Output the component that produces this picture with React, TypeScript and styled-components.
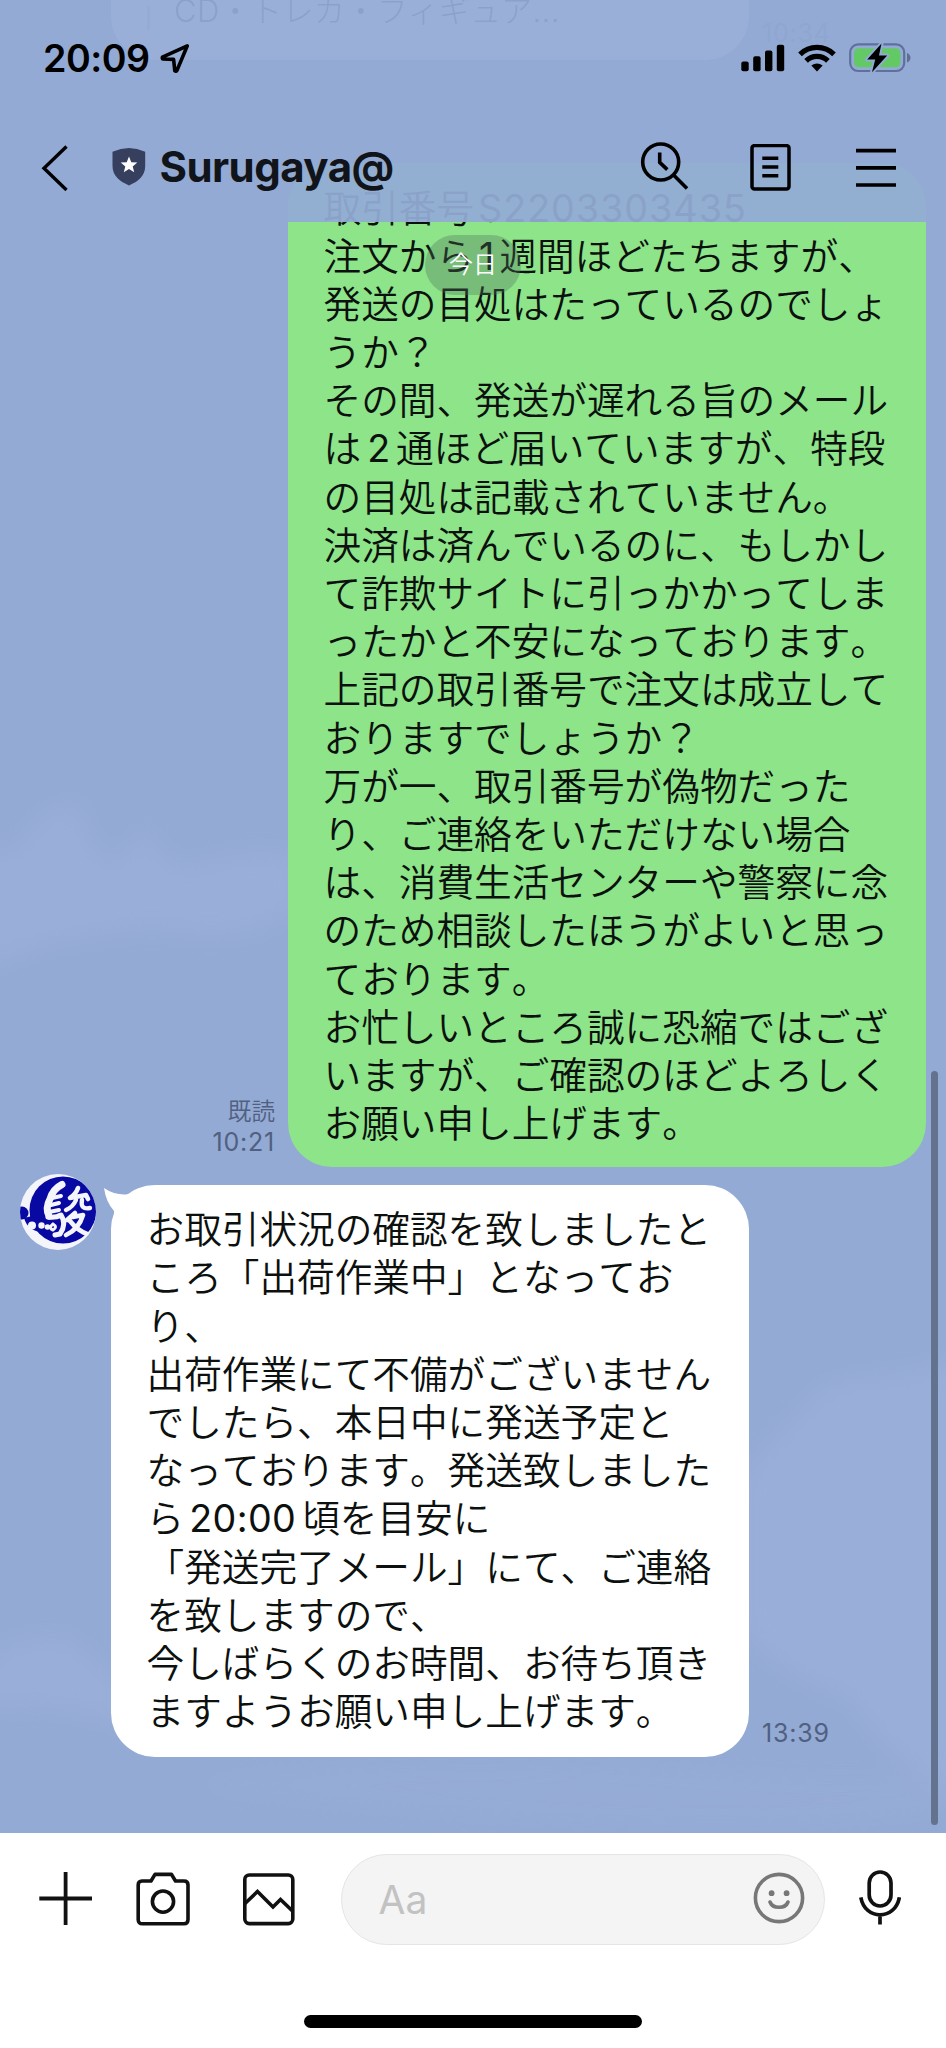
import React from "react";
import styled, { createGlobalStyle } from "styled-components";

const GlobalStyle = createGlobalStyle`
  * { box-sizing: border-box; }
  body { margin: 0; font-family: Inter, "Noto Sans CJK JP", sans-serif; color: #111; }
`;

const Screen = styled.div`
  position: relative;
  display: flex;
  flex-direction: column;
  width: 946px;
  height: 2048px;
  overflow: hidden;
  background: #93aad5;
`;

const Clouds = styled.svg`
  position: absolute;
  inset: 0;
`;

const Header = styled.header`
  position: absolute;
  z-index: 2;
  top: 0;
  left: 0;
  width: 946px;
  height: 222px;
  background: rgba(147, 170, 213, 0.94);
`;

const StatusBar = styled.div`
  display: flex;
  align-items: center;
  height: 116px;
  padding: 0 35px 0 43px;
`;

const Clock = styled.span`
  width: 117px;
  font-size: 37.6px;
  font-weight: 600;
  letter-spacing: -0.5px;
  color: #000;
`;

const StatusIcons = styled.div`
  display: flex;
  align-items: center;
  margin-left: auto;
  gap: 13px;
`;

const TitleBar = styled.div`
  display: flex;
  align-items: center;
  height: 103px;
  padding: 0 50px 0 41px;
`;

const Title = styled.h1`
  margin: 0 auto 0 13.5px;
  font-size: 42px;
  font-weight: 700;
  letter-spacing: -0.55px;
  line-height: 50px;
  padding-bottom: 2px;
  color: #111419;
`;

const Actions = styled.div`
  display: flex;
  align-items: center;
`;

const Action = styled.span<{ $gap: number }>`
  display: flex;
  margin-right: ${(p) => p.$gap}px;
`;

const Chat = styled.main`
  position: relative;
  display: flex;
  flex-direction: column;
  flex: 0 0 1833px;
  height: 1833px;
  overflow: hidden;
`;

const MessageRow = styled.div<{ $own?: boolean; $gap: number }>`
  display: flex;
  align-items: flex-end;
  justify-content: ${(p) => (p.$own ? "flex-end" : "flex-start")};
  padding: ${(p) => (p.$own ? "0 20px 0 0" : "0 0 0 20px")};
  margin-bottom: ${(p) => p.$gap}px;
`;

const Bubble = styled.div<{ $own?: boolean }>`
  position: relative;
  flex: none;
  width: 638px;
  padding: 21.5px 34px ${(p) => (p.$own ? 18.5 : 20.5)}px 35.5px;
  border-radius: 44px;
  background: ${(p) => (p.$own ? "#8de489" : "#fff")};
  font-size: 37.65px;
  font-weight: 350;
  line-height: 48.2px;
  font-kerning: none;
  white-space: nowrap;
  color: #0c100e;
`;

const Line = styled.div`
  height: 48.2px;
`;

const Latin = styled.span<{ $before: number; $after: number; $track: number }>`
  margin: 0 ${(p) => p.$after}px 0 ${(p) => p.$before}px;
  font-weight: 400;
  letter-spacing: ${(p) => p.$track}px;
`;

const Preview = styled.div`
  display: flex;
  align-items: flex-end;
  height: 60px;
  width: 638px;
  padding: 0 0 30px 36px;
  gap: 24px;
  border-radius: 0 0 44px 44px;
  background: #fff;
  font-size: 31px;
  line-height: 38px;
  font-weight: 300;
  letter-spacing: 0.4px;
  white-space: nowrap;
`;

const Rule = styled.span`
  width: 3px;
  height: 24px;
  background: #a9b0bd;
`;

const Meta = styled.div<{ $own?: boolean; $lift?: number }>`
  display: flex;
  flex-direction: column;
  padding: ${(p) => (p.$own ? "0 13px 0 0" : "0 0 0 13px")};
  margin-bottom: ${(p) => p.$lift ?? 9}px;
  text-align: ${(p) => (p.$own ? "right" : "left")};
  font-size: 25px;
  line-height: 30px;
  letter-spacing: 0.8px;
  color: #51607f;
`;

const ReadMark = styled.span`
  font-size: 23.6px;
  font-weight: 350;
  letter-spacing: 0;
`;

const AvatarSlot = styled.div`
  align-self: flex-start;
  flex: none;
  width: 91px;
  margin-top: -11px;
`;

const Tail = styled.svg`
  position: absolute;
  left: -7px;
  top: 3px;
`;

const DatePill = styled.div`
  position: absolute;
  z-index: 3;
  left: 425px;
  top: 235px;
  width: 96px;
  height: 60px;
  border-radius: 30px;
  background: rgba(80, 110, 90, 0.34);
  color: #fff;
  font-size: 24px;
  font-weight: 350;
  line-height: 59px;
  text-align: center;
`;

const ScrollThumb = styled.div`
  position: absolute;
  right: 8px;
  top: 1071px;
  width: 7px;
  height: 754px;
  border-radius: 4px;
  background: #62728f;
`;

const Footer = styled.footer`
  position: relative;
  display: flex;
  flex-direction: column;
  align-items: center;
  flex: 1;
  background: #fff;
`;

const Composer = styled.div`
  display: flex;
  align-items: center;
  width: 946px;
  height: 90px;
  margin-top: 21px;
  padding: 0 45px 0 39px;
`;

const Tools = styled.div`
  display: flex;
  align-items: center;
  width: 302px;
`;

const Tool = styled.span<{ $gap: number }>`
  display: flex;
  margin-right: ${(p) => p.$gap}px;
`;

const Field = styled.div`
  display: flex;
  align-items: center;
  justify-content: space-between;
  width: 485px;
  height: 91px;
  padding: 0 19px 3px 37px;
  border: 1px solid #e5e5e5;
  border-radius: 46px;
  background: #f4f4f4;
  font-size: 39px;
  color: #c2c2c2;
`;

const Placeholder = styled.span`
  padding-top: 3px;
`;

const MicSlot = styled.span`
  display: flex;
  margin: 0 0 4px 34px;
`;

const HomeIndicator = styled.div`
  width: 338px;
  height: 13px;
  margin-top: 71px;
  border-radius: 7px;
  background: #000;
`;

type Part = string | { latin: string; before: number; after: number; track?: number };

const ownLines: Part[][] = [
  ["取引番号", { latin: "S2203303435", before: 4, after: 0, track: 1 }],
  ["注文から", { latin: "1", before: 5, after: 5 }, "週間ほどたちますが、"],
  ["発送の目処はたっているのでしょ"],
  ["うか？"],
  ["その間、発送が遅れる旨のメール"],
  ["は", { latin: "2", before: 6, after: 6 }, "通ほど届いていますが、特段"],
  ["の目処は記載されていません。"],
  ["決済は済んでいるのに、もしかし"],
  ["て詐欺サイトに引っかかってしま"],
  ["ったかと不安になっております。"],
  ["上記の取引番号で注文は成立して"],
  ["おりますでしょうか？"],
  ["万が一、取引番号が偽物だった"],
  ["り、ご連絡をいただけない場合"],
  ["は、消費生活センターや警察に念"],
  ["のため相談したほうがよいと思っ"],
  ["ております。"],
  ["お忙しいところ誠に恐縮ではござ"],
  ["いますが、ご確認のほどよろしく"],
  ["お願い申し上げます。"],
];

const replyLines: Part[][] = [
  ["お取引状況の確認を致しましたと"],
  ["ころ「出荷作業中」となってお"],
  ["り、"],
  ["出荷作業にて不備がございません"],
  ["でしたら、本日中に発送予定と"],
  ["なっております。発送致しました"],
  ["ら", { latin: "20:00", before: 5, after: 6, track: 0.4 }, "頃を目安に"],
  ["「発送完了メール」にて、ご連絡"],
  ["を致しますので、"],
  ["今しばらくのお時間、お待ち頂き"],
  ["ますようお願い申し上げます。"],
];

const Lines = ({ lines }: { lines: Part[][] }) => (
  <>
    {lines.map((parts, i) => (
      <Line key={i}>
        {parts.map((p, j) =>
          typeof p === "string" ? (
            p
          ) : (
            <Latin key={j} $before={p.before} $after={p.after} $track={p.track ?? 0}>
              {p.latin}
            </Latin>
          )
        )}
      </Line>
    ))}
  </>
);

const CloudLayer = () => (
  <Clouds width="946" height="1833" viewBox="0 0 946 1833">
    <defs>
      <filter id="soft" x="-20%" y="-20%" width="140%" height="140%">
        <feGaussianBlur stdDeviation="13" />
      </filter>
    </defs>
    <g fill="#9cb1da" filter="url(#soft)" opacity="0.7">
      <path d="M-20 850 L20 845 Q30 810 80 800 Q90 850 115 865 Q125 835 155 830 Q160 865 190 865 Q240 845 300 855 L300 910 Q240 950 160 930 Q60 935 -20 970Z" />
      <path d="M740 1475 Q770 1440 800 1410 Q820 1375 880 1375 Q930 1370 970 1350 L970 1800 Q880 1760 850 1700 Q780 1680 740 1630Z" />
      <path d="M-20 1660 Q30 1625 75 1640 Q105 1660 130 1700 L130 1730 Q60 1700 -20 1710Z" />
      <path d="M200 1780 Q400 1750 700 1770 T960 1750 L960 1810 Q700 1850 200 1790Z" opacity="0.5" />
    </g>
  </Clouds>
);

const LocationIcon = () => (
  <svg width="30" height="31" viewBox="0 0 30 31" fill="none" stroke="#000" strokeWidth="3.6" strokeLinejoin="round">
    <path d="M27.3 2.8 L2.4 14.2 Q2 15.8 3 16 L13.6 16.4 L14.8 27.8 Q16 29 17 27.4Z" />
  </svg>
);

const SignalIcon = () => (
  <svg width="44" height="28" viewBox="0 0 44 28" fill="#000">
    <rect x="0.3" y="17.6" width="7.4" height="9.6" rx="2" />
    <rect x="12.2" y="12.3" width="7.4" height="14.9" rx="2" />
    <rect x="24" y="6.6" width="7.4" height="20.6" rx="2" />
    <rect x="35.8" y="0.8" width="7.4" height="26.4" rx="2" />
  </svg>
);

const WifiIcon = () => (
  <svg width="38" height="28" viewBox="0 0 38 28">
    <g fill="none" stroke="#000" strokeWidth="5.2">
      <path d="M2 10.4 A24.3 24.3 0 0 1 36 10.4" />
      <path d="M8.1 16.8 A15.6 15.6 0 0 1 29.9 16.8" />
    </g>
    <path d="M13.3 21.6 Q19 17.2 24.7 21.6 L19 27.4Z" />
  </svg>
);

const BatteryIcon = () => (
  <svg width="62" height="30" viewBox="0 0 62 30">
    <rect x="1.2" y="1.4" width="54" height="26.6" rx="8" fill="none" stroke="#5f709a" strokeWidth="2.2" />
    <path d="M58 10 Q61.5 11.5 61.5 14.7 Q61.5 18 58 19.4Z" fill="#5f6f94" />
    <rect x="5" y="5.2" width="46.4" height="19" rx="4.5" fill="#63c965" />
    <path d="M32.5 0.6 L18.2 16.6 H26.2 L23 29.2 L38.2 12.4 H30Z" fill="#000" stroke="#93aad5" strokeWidth="4" paintOrder="stroke" strokeLinejoin="round" />
  </svg>
);

const BackIcon = () => (
  <svg width="27" height="46" viewBox="0 0 27 46" fill="none" stroke="#000" strokeWidth="3.4">
    <path d="M25.5 1.5 L3 23.2 L25.5 45" />
  </svg>
);

const ShieldSvg = styled.svg`
  margin: 0 0 3px 44px;
`;

const ShieldIcon = () => (
  <ShieldSvg width="34" height="39" viewBox="0 0 34 39">
    <path d="M0.5 4.8 Q17 -2.6 33.2 4.8 V19 C33.2 29 26 34.5 17 38.4 C8 34.5 0.5 29 0.5 19Z" fill="#373f5e" />
    <path d="M17 9.6 L19.3 15.2 L25.3 15.6 L20.7 19.5 L22.2 25.3 L17 22.1 L11.8 25.3 L13.3 19.5 L8.7 15.6 L14.7 15.2Z" fill="#fff" />
  </ShieldSvg>
);

const HistorySearchIcon = () => (
  <svg width="49" height="51" viewBox="0 0 49 51" fill="none" stroke="#000" strokeWidth="3.6">
    <circle cx="20.7" cy="20" r="18" />
    <path d="M33.8 33.3 L47 46.5 M19.7 10.6 V20.4 L27.3 27.6" />
  </svg>
);

const NoteIcon = () => (
  <svg width="41" height="47" viewBox="0 0 41 47" fill="none" stroke="#000" strokeWidth="3.5">
    <rect x="2" y="1.6" width="37" height="43.4" rx="2.5" />
    <path d="M12.3 14.2 H28.3 M12.3 23 H28.3 M12.3 31.8 H28.3" />
  </svg>
);

const MenuIcon = () => (
  <svg width="40" height="40" viewBox="0 0 40 40" stroke="#000" strokeWidth="3.7">
    <path d="M0 2.6 H40 M0 19.8 H40 M0 37 H40" />
  </svg>
);

const Avatar = () => (
  <svg width="76" height="76" viewBox="0 0 76 76">
    <defs>
      <clipPath id="disc">
        <circle cx="38" cy="38" r="38" />
      </clipPath>
    </defs>
    <g clipPath="url(#disc)">
      <rect width="76" height="76" fill="#f4f5fb" />
      <circle cx="43" cy="36" r="33.5" fill="#0808a2" />
      <circle cx="2" cy="39" r="6.5" fill="#0808a2" />
      <path d="M4 44 Q8 58 24 58 L30 50 L12 42Z" fill="#0808a2" />
      <g fill="#f4f5fb">
        <circle cx="12" cy="51.5" r="4" />
        <circle cx="21.5" cy="51.5" r="3.2" />
        <circle cx="27.5" cy="53" r="2.8" />
      </g>
      <g fill="none" stroke="#f4f5fb" strokeLinecap="round" strokeLinejoin="round">
        <path d="M42 10.5 Q33 15 30 25 Q25 34 29 42" strokeWidth="7" />
        <path d="M32 24 L41 22 M31 31 L39 29 M29 38 L39 36" strokeWidth="4" />
        <path d="M28 43 Q36 44 41 41 Q47 50 40 60 L35 61" strokeWidth="5" />
        <path d="M33 50 Q38 53 33 56 Q28 54 33 50" strokeWidth="3" />
        <path d="M58 14 Q56 20 50 24 L66 21 L68 25" strokeWidth="4.6" />
        <path d="M56 26 Q53 33 46 36 M62 26 Q60 36 70 34" strokeWidth="4.4" />
        <path d="M55 39 L47 46 M53 43 L63 41 Q59 55 46 61 M50 47 Q57 56 67 60" strokeWidth="4.6" />
      </g>
    </g>
  </svg>
);

const PlusIcon = () => (
  <svg width="54" height="54" viewBox="0 0 54 54" stroke="#111" strokeWidth="3.8">
    <path d="M0.3 26.5 H53 M26.6 0 V53" />
  </svg>
);

const CameraIcon = () => (
  <svg width="54" height="54" viewBox="0 0 54 54" fill="none" stroke="#111" strokeWidth="3.6" strokeLinejoin="round">
    <path d="M6 9 H15 L19 2.4 H35.5 L39.5 9 H48 Q52 9 52 13 V47.5 Q52 51.8 48 51.8 H6.5 Q2.2 51.8 2.2 47.5 V13 Q2.2 9 6 9Z" />
    <circle cx="27" cy="29.6" r="10.6" />
  </svg>
);

const PictureIcon = () => (
  <svg width="54" height="54" viewBox="0 0 54 54" fill="none" stroke="#111" strokeWidth="3.6">
    <rect x="2.8" y="3" width="48" height="48.6" rx="4.5" />
    <path d="M3 31.5 L15.5 19.5 L31 35 L38.5 27.5 L50.5 39" />
  </svg>
);

const SmileIcon = () => (
  <svg width="52" height="52" viewBox="0 0 52 52" fill="none" stroke="#777" strokeWidth="3.6">
    <circle cx="26" cy="26" r="23.6" />
    <path d="M17 30 Q19 35.3 26 35.3 Q33 35.3 35 30" strokeLinecap="round" />
    <g fill="#777" stroke="none">
      <circle cx="18.6" cy="21.2" r="2.9" />
      <circle cx="33.6" cy="21.2" r="2.9" />
    </g>
  </svg>
);

const MicIcon = () => (
  <svg width="42" height="55" viewBox="0 0 42 55" fill="none" stroke="#111" strokeWidth="3.7">
    <rect x="10.2" y="2" width="21.8" height="34" rx="10.9" />
    <path d="M1.8 27.3 C4 39 12 44.8 21 44.8 C30 44.8 38.2 39 40.4 27.3 M21 44.8 V54.6" />
  </svg>
);

export default function App() {
  return (
    <>
      <GlobalStyle />
      <Screen>
        <Chat>
          <CloudLayer />
          <MessageRow $gap={103}>
            <AvatarSlot />
            <Preview>
              <Rule />
              CD・トレカ・フィギュア...
            </Preview>
            <Meta $lift={12}>10:34</Meta>
          </MessageRow>
          <MessageRow $own $gap={18}>
            <Meta $own $lift={10}>
              <ReadMark>既読</ReadMark>
              <span>10:21</span>
            </Meta>
            <Bubble $own>
              <Lines lines={ownLines} />
            </Bubble>
          </MessageRow>
          <MessageRow $gap={76}>
            <AvatarSlot>
              <Avatar />
            </AvatarSlot>
            <Bubble>
              <Tail width="46" height="40" viewBox="0 0 46 40" fill="#fff">
                <path d="M0 0 Q10 7 22 6.5 Q26 6 32 2 L46 20 L10 36 V23 Q2 14 0 0Z" />
              </Tail>
              <Lines lines={replyLines} />
            </Bubble>
            <Meta>13:39</Meta>
          </MessageRow>
          <ScrollThumb />
          <DatePill>今日</DatePill>
        </Chat>
        <Header>
          <StatusBar>
            <Clock>20:09</Clock>
            <LocationIcon />
            <StatusIcons>
              <SignalIcon />
              <WifiIcon />
              <BatteryIcon />
            </StatusIcons>
          </StatusBar>
          <TitleBar>
            <BackIcon />
            <ShieldIcon />
            <Title>Surugaya@</Title>
            <Actions>
              <Action $gap={61}>
                <HistorySearchIcon />
              </Action>
              <Action $gap={65}>
                <NoteIcon />
              </Action>
              <MenuIcon />
            </Actions>
          </TitleBar>
        </Header>
        <Footer>
          <Composer>
            <Tools>
              <Tool $gap={43}>
                <PlusIcon />
              </Tool>
              <Tool $gap={52}>
                <CameraIcon />
              </Tool>
              <PictureIcon />
            </Tools>
            <Field>
              <Placeholder>Aa</Placeholder>
              <SmileIcon />
            </Field>
            <MicSlot>
              <MicIcon />
            </MicSlot>
          </Composer>
          <HomeIndicator />
        </Footer>
      </Screen>
    </>
  );
}
